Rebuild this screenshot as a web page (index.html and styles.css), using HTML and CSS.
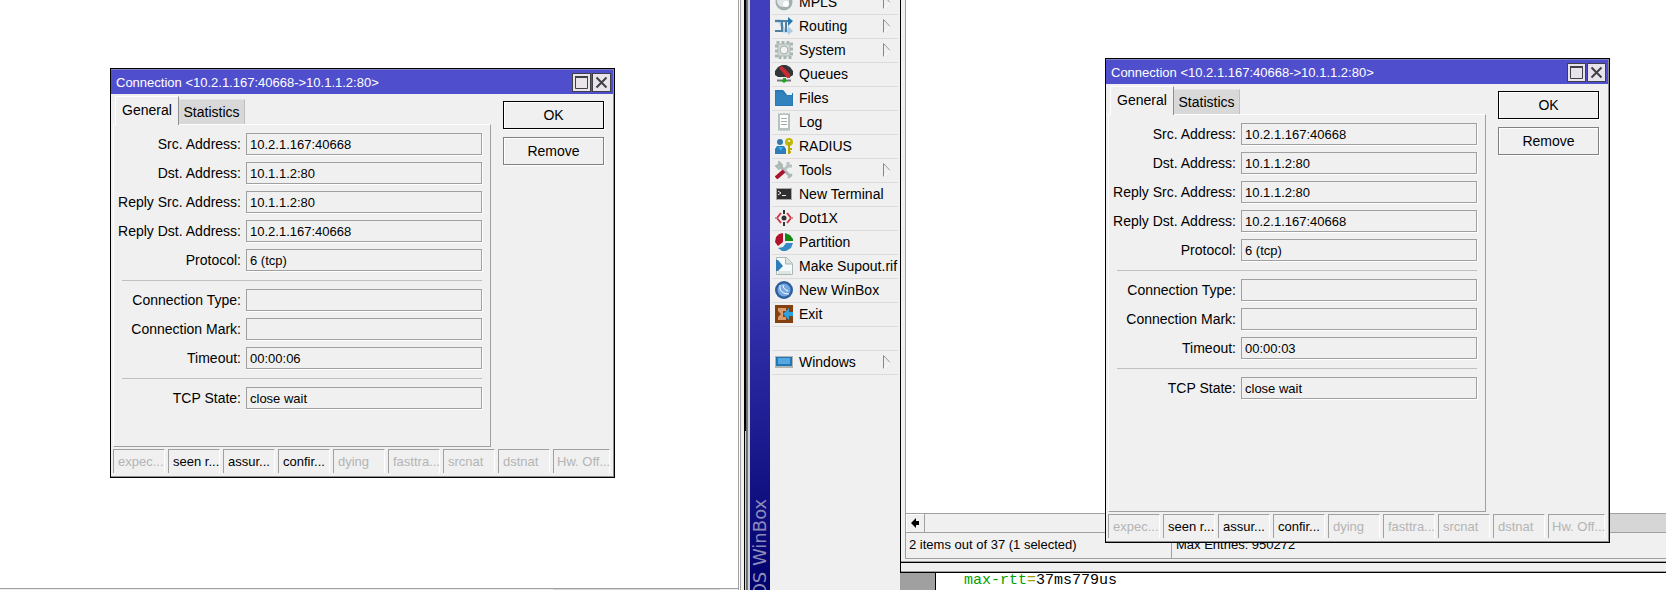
FILE: index.html
```
<!DOCTYPE html>
<html lang="en">
<head>
<meta charset="utf-8">
<title>WinBox</title>
<link rel="stylesheet" href="styles.css">
</head>
<body>
<div class="desktop">

<section class="left">
  <div class="canvas"></div>
  <div class="hscroll-left"><div class="thumb"></div></div>

  <form class="dialog first">
    <div class="title">
      <span class="caption">Connection &lt;10.2.1.167:40668-&gt;10.1.1.2:80&gt;</span>
      <button type="button" class="tbtn" aria-label="Maximize"><svg width="15" height="15" viewBox="0 0 15 15"><path d="M1.5 1v12.500h12V1" fill="none" stroke="#404048"/><path d="M1 2h13" stroke="#404048" stroke-width="2"/></svg></button>
      <button type="button" class="tbtn" aria-label="Close"><svg width="15" height="15" viewBox="0 0 15 15"><path d="M2.500 2.500l10 10M12.500 2.500l-10 10" stroke="#404048" stroke-width="2"/></svg></button>
    </div>
    <div class="main">
      <div class="tabbox">
        <div class="tabs"><button type="button" class="tab active">General</button><button type="button" class="tab">Statistics</button></div>
        <div class="panel">
          <div class="row"><label for="a1">Src. Address:</label><input id="a1" value="10.2.1.167:40668" readonly></div>
          <div class="row"><label for="a2">Dst. Address:</label><input id="a2" value="10.1.1.2:80" readonly></div>
          <div class="row"><label for="a3">Reply Src. Address:</label><input id="a3" value="10.1.1.2:80" readonly></div>
          <div class="row"><label for="a4">Reply Dst. Address:</label><input id="a4" value="10.2.1.167:40668" readonly></div>
          <div class="row"><label for="a5">Protocol:</label><input id="a5" value="6 (tcp)" readonly></div>
          <hr>
          <div class="row"><label for="a6">Connection Type:</label><input id="a6" value="" readonly></div>
          <div class="row"><label for="a7">Connection Mark:</label><input id="a7" value="" readonly></div>
          <div class="row"><label for="a8">Timeout:</label><input id="a8" value="00:00:06" readonly></div>
          <hr>
          <div class="row"><label for="a9">TCP State:</label><input id="a9" value="close wait" readonly></div>
        </div>
      </div>
      <div class="actions">
        <button type="button" class="btn default">OK</button>
        <button type="button" class="btn">Remove</button>
      </div>
    </div>
    <div class="flags">
      <span class="off">expec...</span><span>seen r...</span><span>assur...</span><span>confir...</span><span class="off">dying</span><span class="off">fasttra...</span><span class="off">srcnat</span><span class="off">dstnat</span><span class="off">Hw. Off...</span>
    </div>
  </form>
</section>

<section class="middle">
  <div class="frame"><div class="edge"></div></div>
  <div class="brand"><span>RouterOS WinBox</span></div>
  <nav class="menu">
    <a href="#"><svg class="ico" viewBox="0 0 18 18"><circle cx="9" cy="9" r="8.500" fill="#a4b0b0"/><circle cx="8" cy="8" r="6" fill="#dfe6e6"/><circle cx="11" cy="11" r="3" fill="#fff"/></svg>MPLS<svg class="arr" viewBox="0 0 8 15"><path d="M.5 14V.5" stroke="#888"/><path d="M.5 .5L7 7.500" stroke="#999"/><path d="M7 7.500L.5 14" stroke="#fff"/></svg></a>
    <a href="#"><svg class="ico" viewBox="0 0 18 18"><path d="M0 4h5l4 10h5" fill="none" stroke="#a9cbe4" stroke-width="3"/><path d="M13 9l5 5-5 4z" fill="#a9cbe4"/><path d="M0 4h6M0 14h7V4h7M11 4v11" fill="none" stroke="#4f80a6" stroke-width="2"/><path d="M13 0l5 4-5 5z" fill="#2878ae"/></svg>Routing<svg class="arr" viewBox="0 0 8 15"><path d="M.5 14V.5" stroke="#888"/><path d="M.5 .5L7 7.500" stroke="#999"/><path d="M7 7.500L.5 14" stroke="#fff"/></svg></a>
    <a href="#"><svg class="ico" viewBox="0 0 18 18"><rect x="1.500" y="1.500" width="15" height="15" fill="none" stroke="#a7b6b3" stroke-width="3" stroke-dasharray="3 2"/><rect x="3" y="3" width="12" height="12" fill="#d2dad8" stroke="#aab8b5"/><circle cx="9" cy="9" r="4" fill="#f2f2f2" stroke="#9fb0ad"/></svg>System<svg class="arr" viewBox="0 0 8 15"><path d="M.5 14V.5" stroke="#888"/><path d="M.5 .5L7 7.500" stroke="#999"/><path d="M7 7.500L.5 14" stroke="#fff"/></svg></a>
    <a href="#"><svg class="ico" viewBox="0 0 18 18"><path d="M0 10V6l3-4 4-2h4l4 2 3 4v4l-3 2H3z" fill="#333538"/><path d="M4 3l3-2 8 8v4h-3z" fill="#cc2a33"/><path d="M2 15.500h14" stroke="#777" stroke-width="2"/><path d="M8 13h3v2h2l-4 3-4-3h3z" fill="#1fa51f"/></svg>Queues</a>
    <a href="#"><svg class="ico" viewBox="0 0 18 18"><path d="M0 1h8l3 3h7v13H0z" fill="#2a79b3"/><path d="M10 3h7v3h-5z" fill="#e8f2f8"/><path d="M1 3h6l4 4h6v9H1z" fill="#3282bd"/></svg>Files</a>
    <a href="#"><svg class="ico" viewBox="0 0 18 18"><path d="M3 0h12v18H3z" fill="#b4c3c0"/><path d="M5 2h8v13H5z" fill="#fff"/><path d="M6 5.500h6M6 8.500h6M6 11.500h6" stroke="#9cafab"/><path d="M4 .5h10M4 17.500h10" stroke="#eee" stroke-dasharray="1 2"/></svg>Log</a>
    <a href="#"><svg class="ico" viewBox="0 0 18 18"><circle cx="5" cy="5" r="3" fill="#3279ae"/><path d="M0 17v-5l2-3h7l2 3v5z" fill="#2f7db6"/><path d="M3 10h5l-2 4z" fill="#36b3ee"/><circle cx="14" cy="5" r="4" fill="#c3b80c"/><path d="M14 5v12M14 12h3M14 15h2" stroke="#b7aa06" stroke-width="2"/><circle cx="14" cy="4" r="1" fill="#fff"/></svg>RADIUS</a>
    <a href="#"><svg class="ico" viewBox="0 0 18 18"><path d="M3 3l13 13" stroke="#abb8b6" stroke-width="3"/><path d="M1 5l3-1V1l3 3-3 4zM13 17l4-4" stroke="#abb8b6" stroke-width="2" fill="none"/><path d="M9 9l5-5" stroke="#b8c2c0" stroke-width="3"/><path d="M13 1v4h4" stroke="#b8c2c0" stroke-width="3" fill="none"/><path d="M1 17l8-7" stroke="#a9142b" stroke-width="4"/></svg>Tools<svg class="arr" viewBox="0 0 8 15"><path d="M.5 14V.5" stroke="#888"/><path d="M.5 .5L7 7.500" stroke="#999"/><path d="M7 7.500L.5 14" stroke="#fff"/></svg></a>
    <a href="#"><svg class="ico" viewBox="0 0 18 18"><rect x="1" y="3" width="16" height="12" fill="#a8a8a8"/><rect x="2" y="4" width="14" height="10" fill="#303030"/><path d="M3 6l3 2-3 2M7 10.500h4" fill="none" stroke="#eee"/></svg>New Terminal</a>
    <a href="#"><svg class="ico" viewBox="0 0 18 18"><path d="M6 4L2 9l4 5M12 4l4 5-4 5" fill="none" stroke="#cc3c48" stroke-width="2"/><path d="M9 1v4M9 13v4" stroke="#333" stroke-width="2"/><circle cx="9" cy="9" r="2.500" fill="#333"/><path d="M0 9h2M16 9h2" stroke="#d98d92" stroke-width="2"/></svg>Dot1X</a>
    <a href="#"><svg class="ico" viewBox="0 0 18 18"><path d="M8 0v9l-5 4-3-4 1-5 3-3z" fill="#b3122c"/><path d="M10 0l5 2 3 4v2h-8z" fill="#168a12"/><path d="M18 10l-2 5-5 3H7l-4-3 5-1 3-4z" fill="#3589c4"/></svg>Partition</a>
    <a href="#"><svg class="ico" viewBox="0 0 18 18"><path d="M1.500 .5h10l6 6v11h-16z" fill="#f7fafa" stroke="#a8b8b5"/><path d="M10.500 1v6h7" fill="#d9e1df" stroke="#a8b8b5"/><path d="M1 3h2l5 6-5 5H1z" fill="#2c7db8"/><path d="M3 14h13v3H3z" fill="#dfe5e4"/></svg>Make Supout.rif</a>
    <a href="#"><svg class="ico" viewBox="0 0 18 18"><circle cx="9" cy="9" r="9" fill="#2c5f9c"/><circle cx="9" cy="9" r="6.500" fill="#76a8e4"/><path d="M5 4c-1 6 3 9 9 9M8 4c0 3 2 5 5 6" fill="none" stroke="#fff" stroke-width="1"/></svg>New WinBox</a>
    <a href="#"><svg class="ico" viewBox="0 0 18 18"><path d="M0 0h18v18H0z" fill="#84400f"/><path d="M3 3h8v3H8v6h3v3H3v-3l3-3-3-3z" fill="#d99b6c"/><path d="M8 9l6-6v4h4v4h-4v4z" fill="#2aa0e0"/></svg>Exit</a>
    <div class="blank"></div>
    <a href="#"><svg class="ico" viewBox="0 0 18 18"><rect y="3" width="18" height="12" fill="#b0b4b4"/><rect x="1" y="4" width="16" height="9" fill="#2277b2"/><rect x="3" y="5" width="12" height="6" fill="#56a7e0"/></svg>Windows<svg class="arr" viewBox="0 0 8 15"><path d="M.5 14V.5" stroke="#888"/><path d="M.5 .5L7 7.500" stroke="#999"/><path d="M7 7.500L.5 14" stroke="#fff"/></svg></a>
  </nav>
</section>

<section class="right">
  <div class="listwin">
    <div class="canvas"></div>
    <div class="hscroll">
      <button type="button" class="sbtn" aria-label="Scroll left"><svg width="8" height="10" viewBox="0 0 8 10"><path d="M0 5l5-5v3h3v4H5v3z"/></svg></button>
      <div class="bar"></div>
      <div class="track"></div>
    </div>
    <div class="status"><span class="count">2 items out of 37 (1 selected)</span><span class="max">Max Entries: 950272</span></div>
  </div>
  <div class="strip"></div>
  <div class="terminal"><div class="gutter"></div><code><span class="key">max-rtt</span><span class="eq">=</span>37ms779us</code></div>

  <form class="dialog second">
    <div class="title">
      <span class="caption">Connection &lt;10.2.1.167:40668-&gt;10.1.1.2:80&gt;</span>
      <button type="button" class="tbtn" aria-label="Maximize"><svg width="15" height="15" viewBox="0 0 15 15"><path d="M1.5 1v12.500h12V1" fill="none" stroke="#404048"/><path d="M1 2h13" stroke="#404048" stroke-width="2"/></svg></button>
      <button type="button" class="tbtn" aria-label="Close"><svg width="15" height="15" viewBox="0 0 15 15"><path d="M2.500 2.500l10 10M12.500 2.500l-10 10" stroke="#404048" stroke-width="2"/></svg></button>
    </div>
    <div class="main">
      <div class="tabbox">
        <div class="tabs"><button type="button" class="tab active">General</button><button type="button" class="tab">Statistics</button></div>
        <div class="panel tall">
          <div class="row"><label for="b1">Src. Address:</label><input id="b1" value="10.2.1.167:40668" readonly></div>
          <div class="row"><label for="b2">Dst. Address:</label><input id="b2" value="10.1.1.2:80" readonly></div>
          <div class="row"><label for="b3">Reply Src. Address:</label><input id="b3" value="10.1.1.2:80" readonly></div>
          <div class="row"><label for="b4">Reply Dst. Address:</label><input id="b4" value="10.2.1.167:40668" readonly></div>
          <div class="row"><label for="b5">Protocol:</label><input id="b5" value="6 (tcp)" readonly></div>
          <hr>
          <div class="row"><label for="b6">Connection Type:</label><input id="b6" value="" readonly></div>
          <div class="row"><label for="b7">Connection Mark:</label><input id="b7" value="" readonly></div>
          <div class="row"><label for="b8">Timeout:</label><input id="b8" value="00:00:03" readonly></div>
          <hr>
          <div class="row"><label for="b9">TCP State:</label><input id="b9" value="close wait" readonly></div>
        </div>
      </div>
      <div class="actions">
        <button type="button" class="btn default">OK</button>
        <button type="button" class="btn">Remove</button>
      </div>
    </div>
    <div class="flags">
      <span class="off">expec...</span><span>seen r...</span><span>assur...</span><span>confir...</span><span class="off">dying</span><span class="off">fasttra...</span><span class="off">srcnat</span><span class="off">dstnat</span><span class="off">Hw. Off...</span>
    </div>
  </form>
</section>

</div>
</body>
</html>
```
FILE: styles.css
```
* {box-sizing:border-box;}
body {margin:0; font:14px/16px "Liberation Sans",Arial,sans-serif; color:#000; background:#fff;}
button, input {font:inherit; color:inherit; margin:0; padding:0; border-radius:0;}

.desktop {display:grid; grid-template-columns:738fr 162px 766fr; height:100vh; overflow:hidden;}
.left, .right {position:relative; display:flex; flex-direction:column; min-width:0;}
.canvas {flex:1; background:#fff;}
.hscroll-left {height:2px; border-top:1px solid #a0a0a0; background:#f0f0f0; display:flex; justify-content:flex-end; padding-right:18px;}
.hscroll-left .thumb {width:167px; background:#d6d6d6;}

/* connection dialog */
.dialog {position:absolute; width:505px; border:1px solid #000; background:#f0f0f0; box-shadow:inset -1px -1px #909090; padding:0 1px 1px 0;}
.first {left:110px; top:68px;}
.second {left:205px; top:58px;}
.title {display:flex; align-items:center; gap:1px; height:25px; padding:0 2px 0 5px; border-top:1px solid #8080c0; background:#4f4fcd; color:#fff; font-size:13px;}
.caption {flex:1; padding-top:2px;}
.tbtn {width:19px; height:19px; border:1px solid #404048; background:#e8e4ea; display:flex; align-items:center; justify-content:center;}
.main {display:flex; padding:2px 9px 0 2px;}
.tabbox {flex:1;}
.tabs {display:flex; align-items:flex-end; padding-left:2px; height:28px;}
.tab {height:25px; width:66px; border:0; border-top:1px solid #e4e4e4; border-right:1px solid #c0c0c0; background:#d8d8d8;}
.tab.active {height:29px; width:64px; margin-bottom:-1px; padding-bottom:2px; border-top:1px solid #fff; border-left:1px solid #fff; border-right:1px solid #909090; background:#f0f0f0; position:relative;}
.panel {min-height:323px; padding:8px 8px 0; border:1px solid #a0a0a0; border-top-color:#fff; border-left-color:#fff;}
.panel.tall {min-height:398px;}
.row {display:grid; grid-template-columns:119px 1fr; gap:5px; align-items:center; margin-bottom:7px;}
.row label {text-align:right; white-space:nowrap; justify-self:end;}
.row input {width:100%; height:22px; border:1px solid #a0a0a0; background:#f0f0f0; box-shadow:1px 1px #fff; padding:0 3px; font-size:13px; outline:0;}
hr {margin:9px 0 8px; border:0; border-top:1px solid #c0c0c0;}
.actions {width:101px; margin-left:12px; padding-top:5px;}
.btn {display:block; width:100%; height:28px; margin-bottom:8px; border:1px solid #808080; background:#f0f0f0; box-shadow:inset 1px 1px #fff, 1px 1px #fff;}
.btn.default {border-color:#000;}
.flags {display:flex; gap:3px; padding:2px 3px 3px 2px;}
.flags span {width:52px; height:24px; padding-left:4px; line-height:23px; font-size:13px; white-space:nowrap; border-top:1px solid #a0a0a0; border-left:1px solid #a0a0a0; border-right:1px solid #fff;}
.flags span:last-child {flex:1; padding-left:3px;}
.flags .off {color:#b4b4b4;}

/* side menu */
.middle {display:flex; background:#f0f0f0; overflow:hidden;}
.frame {width:12px; flex:none; display:flex; border-left:1px solid #a0a0a0; box-shadow:inset 1px 0 #fff, inset 2px 0 #a0a0a0;}
.frame .edge {width:6px; margin-left:5px; border-left:1px solid #000; background:linear-gradient(#000 73%,#d0d0d0 73%) 0 0/1px 100% no-repeat, linear-gradient(90deg,#606060 20%,#808080 60%,#d0d0d0 60%);}
.brand {width:20px; flex:none; display:flex; align-items:center; justify-content:center; background:linear-gradient(#403ebd 0,#403ebd 40%,#00006c 100%);}
.brand span {height:91px; margin-top:auto; writing-mode:vertical-rl; transform:rotate(180deg); direction:rtl; white-space:nowrap; font:18px/20px "DejaVu Sans",Verdana,sans-serif; color:#8c8cba;}
.menu {flex:1; min-width:0; margin-top:-9px; padding:0 2px;}
.menu a, .menu .blank {display:flex; align-items:center; height:24px; padding:0 7px 1px 3px; border-bottom:1px solid #dcdcdc; color:#000; text-decoration:none; white-space:nowrap;}
.ico {width:18px; height:18px; margin-right:6px; flex:none;}
.arr {width:8px; height:15px; margin-left:auto;}

/* list window behind the dialog */
.listwin {flex:1; display:flex; flex-direction:column; padding:0 0 3px 4px; border-left:1px solid #000; border-bottom:1px solid #000; background:#f0f0f0; box-shadow:inset 0 -1px #a0a0a0;}
.listwin > div {border-left:1px solid #a0a0a0;}
.hscroll {display:flex; height:20px; border-top:1px solid #a0a0a0; border-bottom:1px solid #a0a0a0;}
.sbtn {width:19px; border:0; border-right:1px solid #a0a0a0; background:#f0f0f0; box-shadow:inset 1px 1px #fff; display:flex; align-items:center; justify-content:center;}
.bar {flex:1;}
.track {flex:1; background:#d6d6d6;}
.status {display:flex; height:26px; border-bottom:1px solid #a0a0a0; font-size:13px; line-height:23px;}
.status .count {width:265px; padding-left:3px;}
.status .max {border-left:1px solid #a0a0a0; padding-left:4px;}
.strip {height:10px; border-left:1px solid #000; border-bottom:1px solid #000; background:#f0f0f0; box-shadow:inset 0 -1px #a0a0a0;}
.terminal {display:flex; height:17px;}
.gutter {width:36px; background:#a0a0a0; border-right:1px solid #000;}
.terminal code {padding-left:28px; font:15px/16px "Liberation Mono",monospace;}
.key {color:#00a000;}
.eq {color:#a0a000;}
```
